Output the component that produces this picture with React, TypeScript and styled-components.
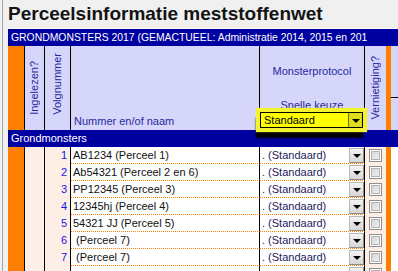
import styled, { createGlobalStyle } from "styled-components";

const GlobalStyle = createGlobalStyle`
  html, body { margin: 0; padding: 0; }
  body {
    background: #f0f0f0;
    font-family: "Liberation Sans", Arial, sans-serif;
    overflow: hidden;
  }
`;

const COLUMNS = "17px 20px 26px 189px 105px 21px 5px 1fr";
const ORANGE = "#ff8000";
const NAVY = "#0000a0";
const LAVENDER = "#d6d6fb";
const PEACH = "#fdefe5";
const HEAD_TEXT = "#28289c";

type Row = { nr: string; name: string; protocol: string };

const rows: Row[] = [
  { nr: "1", name: "AB1234 (Perceel 1)", protocol: ". (Standaard)" },
  { nr: "2", name: "Ab54321 (Perceel 2 en 6)", protocol: ". (Standaard)" },
  { nr: "3", name: "PP12345 (Perceel 3)", protocol: ". (Standaard)" },
  { nr: "4", name: "12345hj (Perceel 4)", protocol: ". (Standaard)" },
  { nr: "5", name: "54321 JJ (Perceel 5)", protocol: ". (Standaard)" },
  { nr: "6", name: " (Perceel 7)", protocol: ". (Standaard)" },
  { nr: "7", name: " (Perceel 7)", protocol: ". (Standaard)" },
  { nr: "", name: "", protocol: "" },
];

export default function App() {
  return (
    <>
      <GlobalStyle />
      <Window>
        <Title>Perceelsinformatie meststoffenwet</Title>
        <Sheet>
          <BlueBar $size={10.4}>
            GRONDMONSTERS 2017 (GEMACTUEEL: Administratie 2014, 2015 en 201
          </BlueBar>

          <OrangeCell $tall />
          <HeadCell $align="center" $bottom={15}>
            <Vertical>Ingelezen?</Vertical>
          </HeadCell>
          <HeadCell $align="center" $bottom={15}>
            <Vertical>Volgnummer</Vertical>
          </HeadCell>
          <HeadCell $align="flex-start" $bottom={2}>
            <HeadLabel>Nummer en/of naam</HeadLabel>
          </HeadCell>
          <ProtocolHead>
            <HeadLabel>Monsterprotocol</HeadLabel>
            <SubLabel>Snelle keuze</SubLabel>
            <QuickSelect>
              <span>Standaard</span>
              <QuickButton>
                <Arrow />
              </QuickButton>
            </QuickSelect>
          </ProtocolHead>
          <HeadCell $align="center" $bottom={10} $noBorder>
            <Vertical>Vernietiging?</Vertical>
          </HeadCell>
          <Stripe $tall />
          <RestHead>
            <RestTop />
          </RestHead>

          <BlueBar $size={11}>Grondmonsters</BlueBar>

          {rows.map((row, i) => (
            <RowGroup key={i}>
              <OrangeCell />
              <PeachCell />
              <NumberCell>{row.nr}</NumberCell>
              <NameCell>{row.name}</NameCell>
              <ProtocolCell>
                <ProtocolText>{row.protocol}</ProtocolText>
                <DropButton>
                  <Arrow />
                </DropButton>
              </ProtocolCell>
              <CheckCell>
                <CheckBox />
              </CheckCell>
              <Stripe />
              <RestCell />
            </RowGroup>
          ))}
        </Sheet>
      </Window>
    </>
  );
}

const Window = styled.div`
  width: 396px;
  height: 271px;
  margin-left: 2px;
  padding-left: 5px;
  box-sizing: border-box;
  border-left: 1px solid #a3a3a3;
  overflow: hidden;
`;

const Title = styled.div`
  height: 28px;
  border-bottom: 1px solid #fafafa;
  font-family: "Liberation Sans Narrow", "Liberation Sans", Arial, sans-serif;
  font-weight: bold;
  font-size: 19px;
  line-height: 28px;
  color: #141414;
  white-space: nowrap;
`;

const Sheet = styled.div`
  display: grid;
  grid-template-columns: ${COLUMNS};
  width: 390px;
`;

const RowGroup = styled.div`
  display: contents;
`;

const BlueBar = styled.div<{ $size: number }>`
  grid-column: 1 / -1;
  height: 17px;
  padding-left: 3px;
  background: ${NAVY};
  color: #fff;
  font-size: ${({ $size }) => $size}px;
  line-height: 17px;
  white-space: nowrap;
`;

const OrangeCell = styled.div<{ $tall?: boolean }>`
  height: ${({ $tall }) => ($tall ? 84 : 17)}px;
  box-sizing: border-box;
  background: ${ORANGE};
  border-right: 1px solid #000;
`;

const Stripe = styled.div<{ $tall?: boolean }>`
  height: ${({ $tall }) => ($tall ? 84 : 17)}px;
  background: ${ORANGE};
`;

const HeadCell = styled.div<{ $align: string; $bottom: number; $noBorder?: boolean }>`
  height: 84px;
  box-sizing: border-box;
  display: flex;
  align-items: flex-end;
  justify-content: ${({ $align }) => $align};
  padding: 0 0 ${({ $bottom }) => $bottom}px ${({ $align }) => ($align === "flex-start" ? 3 : 0)}px;
  background: ${LAVENDER};
  border-right: ${({ $noBorder }) => ($noBorder ? "none" : "1px solid #000")};
`;

const Vertical = styled.span`
  writing-mode: vertical-rl;
  transform: rotate(180deg);
  font-size: 11px;
  line-height: 13px;
  color: ${HEAD_TEXT};
  white-space: nowrap;
`;

const HeadLabel = styled.span`
  font-size: 11px;
  line-height: 14px;
  color: ${HEAD_TEXT};
  white-space: nowrap;
`;

const SubLabel = styled(HeadLabel)`
  margin-top: 20px;
`;

const ProtocolHead = styled.div`
  height: 84px;
  box-sizing: border-box;
  display: flex;
  flex-direction: column;
  align-items: center;
  padding-top: 18px;
  background: ${LAVENDER};
  border-right: 1px solid #000;
`;

const QuickSelect = styled.div`
  position: relative;
  z-index: 2;
  align-self: flex-start;
  width: 103px;
  height: 16px;
  box-sizing: border-box;
  display: flex;
  align-items: center;
  justify-content: space-between;
  padding-left: 3px;
  background: #ffff00;
  border: 1px solid #000;
  font-size: 11px;
  color: #000;
  box-shadow: 0 0 1px 4px #f2f230, -2px 8px 2px 2px #000;
`;

const QuickButton = styled.div`
  width: 14px;
  height: 14px;
  box-sizing: border-box;
  display: flex;
  align-items: flex-end;
  justify-content: center;
  padding-bottom: 4px;
  background: #dede1c;
  border-left: 1px solid #6e6e00;
`;

const Arrow = styled.span`
  width: 0;
  height: 0;
  border-left: 4px solid transparent;
  border-right: 4px solid transparent;
  border-top: 4px solid #000;
`;

const RestHead = styled.div`
  height: 84px;
  background: ${LAVENDER};
`;

const RestTop = styled.div`
  height: 51px;
  border-bottom: 1px solid #000;
`;

const PeachCell = styled.div`
  height: 17px;
  box-sizing: border-box;
  background: ${PEACH};
  border-right: 1px solid #000;
`;

const NumberCell = styled(PeachCell)`
  padding-right: 3px;
  text-align: right;
  font-size: 11px;
  line-height: 17px;
  color: #1616e8;
`;

const NameCell = styled.div`
  height: 17px;
  box-sizing: border-box;
  padding-left: 2px;
  background: #fff;
  border-right: 1px solid #000;
  border-bottom: 1px dotted ${ORANGE};
  font-size: 11px;
  line-height: 16px;
  color: #111;
  white-space: pre;
  overflow: hidden;
`;

const ProtocolCell = styled(NameCell)`
  display: flex;
  align-items: flex-start;
  justify-content: space-between;
  padding-right: 0;
`;

const ProtocolText = styled.span`
  color: #22225c;
`;

const DropButton = styled.div`
  width: 15px;
  height: 15px;
  margin-top: 1px;
  box-sizing: border-box;
  display: flex;
  align-items: flex-end;
  justify-content: center;
  padding-bottom: 4px;
  background: linear-gradient(#f4f4f4, #d6d6d6);
  border: 1px solid #8c8c8c;
  border-top-color: #b8b8b8;
  border-left-color: #b8b8b8;
`;

const CheckCell = styled.div`
  height: 17px;
  display: flex;
  align-items: flex-start;
  justify-content: center;
  padding-top: 2px;
  box-sizing: border-box;
  background: ${PEACH};
`;

const CheckBox = styled.div`
  width: 13px;
  height: 13px;
  box-sizing: border-box;
  border: 1px solid #8e8e8e;
  background: linear-gradient(135deg, #cfcfcf, #f6f6f6);
  box-shadow: inset 0 0 0 1px #fff, inset 0 0 0 2px #b4b4b4;
`;

const RestCell = styled.div`
  height: 17px;
  background: #fff;
`;
